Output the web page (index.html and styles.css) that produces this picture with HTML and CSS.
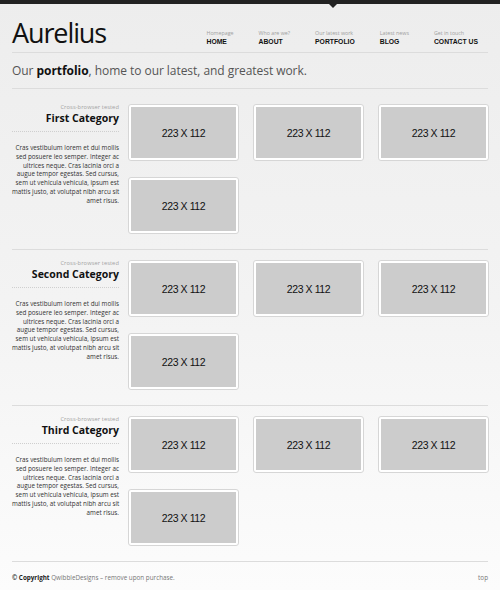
FILE: index.html
```html
<!DOCTYPE html>
<html>
<head>
<meta charset="utf-8">
<title>Aurelius — Portfolio</title>
<link rel="stylesheet" href="styles.css">
</head>
<body>
<div class="topbar"><span class="pointer"></span></div>
<div class="wrap">
  <header class="header">
    <div class="logo">Aurelius</div>
    <nav class="nav">
      <a class="nav-item" href="#"><span class="nav-sub">Homepage</span><span class="nav-main">HOME</span></a>
      <a class="nav-item" href="#"><span class="nav-sub">Who are we?</span><span class="nav-main">ABOUT</span></a>
      <a class="nav-item" href="#"><span class="nav-sub">Our latest work</span><span class="nav-main">PORTFOLIO</span></a>
      <a class="nav-item" href="#"><span class="nav-sub">Latest news</span><span class="nav-main">BLOG</span></a>
      <a class="nav-item" href="#"><span class="nav-sub">Get in touch</span><span class="nav-main">CONTACT US</span></a>
    </nav>
  </header>
  <div class="tagline">Our <b>portfolio</b>, home to our latest, and greatest work.</div>

  <section class="cat first">
    <div class="cat-info">
      <p class="cat-tag">Cross-browser tested</p>
      <h2 class="cat-title">First Category</h2>
      <p class="cat-desc">Cras vestibulum lorem et dui mollis<br>sed posuere leo semper. Integer ac<br>ultrices neque. Cras lacinia orci a<br>augue tempor egestas. Sed cursus,<br>sem ut vehicula vehicula, ipsum est<br>mattis justo, at volutpat nibh arcu sit<br>amet risus.</p>
    </div>
    <div class="thumbs">
      <div class="thumb"><div class="thumb-img">223 X 112</div></div>
      <div class="thumb"><div class="thumb-img">223 X 112</div></div>
      <div class="thumb"><div class="thumb-img">223 X 112</div></div>
      <div class="thumb"><div class="thumb-img">223 X 112</div></div>
    </div>
  </section>

  <section class="cat">
    <div class="cat-info">
      <p class="cat-tag">Cross-browser tested</p>
      <h2 class="cat-title">Second Category</h2>
      <p class="cat-desc">Cras vestibulum lorem et dui mollis<br>sed posuere leo semper. Integer ac<br>ultrices neque. Cras lacinia orci a<br>augue tempor egestas. Sed cursus,<br>sem ut vehicula vehicula, ipsum est<br>mattis justo, at volutpat nibh arcu sit<br>amet risus.</p>
    </div>
    <div class="thumbs">
      <div class="thumb"><div class="thumb-img">223 X 112</div></div>
      <div class="thumb"><div class="thumb-img">223 X 112</div></div>
      <div class="thumb"><div class="thumb-img">223 X 112</div></div>
      <div class="thumb"><div class="thumb-img">223 X 112</div></div>
    </div>
  </section>

  <section class="cat">
    <div class="cat-info">
      <p class="cat-tag">Cross-browser tested</p>
      <h2 class="cat-title">Third Category</h2>
      <p class="cat-desc">Cras vestibulum lorem et dui mollis<br>sed posuere leo semper. Integer ac<br>ultrices neque. Cras lacinia orci a<br>augue tempor egestas. Sed cursus,<br>sem ut vehicula vehicula, ipsum est<br>mattis justo, at volutpat nibh arcu sit<br>amet risus.</p>
    </div>
    <div class="thumbs">
      <div class="thumb"><div class="thumb-img">223 X 112</div></div>
      <div class="thumb"><div class="thumb-img">223 X 112</div></div>
      <div class="thumb"><div class="thumb-img">223 X 112</div></div>
      <div class="thumb"><div class="thumb-img">223 X 112</div></div>
    </div>
  </section>

  <footer class="footer">
    <p class="copy"><b>© Copyright</b> QwibbleDesigns – remove upon purchase.</p>
    <a class="top-link" href="#">top</a>
  </footer>
</div>
</body>
</html>
```
FILE: styles.css
```css
html, body {
  margin: 0;
  padding: 0;
}
body {
  background: linear-gradient(#ededed 0px, #f3f3f3 300px, #fcfcfc 590px);
  font-family: "Open Sans", "DejaVu Sans", sans-serif;
  color: #222;
  min-height: 590px;
}
.topbar {
  height: 4px;
  background: #222;
  position: relative;
}
.pointer {
  position: absolute;
  left: 329px;
  top: 4px;
  width: 0;
  height: 0;
  border-left: 4px solid transparent;
  border-right: 4px solid transparent;
  border-top: 4px solid #222;
}
.wrap {
  width: 476px;
  margin: 0 12px;
}
.header {
  display: flex;
  justify-content: space-between;
  align-items: flex-start;
  height: 48px;
  border-bottom: 1px solid #dcdcdc;
}
.logo {
  font-size: 27px;
  line-height: 27px;
  letter-spacing: -1.1px;
  color: #111;
  margin-top: 15px;
}
.nav {
  display: flex;
  gap: 25px;
  padding-right: 10px;
  margin-top: 25px;
}
.nav-item {
  display: flex;
  flex-direction: column;
  text-decoration: none;
}
.nav-sub {
  font-size: 5.3px;
  line-height: 8px;
  color: #a0a0a0;
}
.nav-main {
  font-family: "Liberation Sans", Arial, sans-serif;
  font-weight: bold;
  font-size: 6.8px;
  line-height: 10px;
  color: #111;
}
.tagline {
  height: 35px;
  line-height: 35px;
  font-size: 12px;
  letter-spacing: -0.05px;
  color: #555;
  border-bottom: 1px solid #dcdcdc;
}
.tagline b {
  color: #111;
}
.cat {
  display: flex;
  gap: 9px;
  padding: 10px 0 15px;
  border-bottom: 1px solid #dcdcdc;
}
.cat.first {
  padding-top: 15px;
}
.cat-info {
  width: 107px;
  flex: none;
  text-align: right;
}
.cat-tag {
  margin: 0;
  font-size: 5.7px;
  line-height: 7px;
  color: #a3a3a3;
  letter-spacing: 0.1px;
}
.cat-title {
  margin: 0;
  font-size: 10.5px;
  line-height: 14px;
  font-weight: bold;
  color: #111;
  padding-bottom: 6px;
  border-bottom: 1px dotted #cfcfcf;
}
.cat-desc {
  margin: 12px 0 0;
  font-size: 6.3px;
  line-height: 8.8px;
  color: #333;
  white-space: nowrap;
}
.thumbs {
  display: grid;
  grid-template-columns: repeat(3, 111px);
  column-gap: 14px;
  row-gap: 16px;
  align-content: start;
}
.thumb {
  box-sizing: border-box;
  width: 111px;
  height: 57px;
  padding: 2px;
  background: #fff;
  border: 1px solid #d6d6d6;
  border-radius: 3px;
}
.thumb-img {
  height: 100%;
  background: #cccccc;
  display: flex;
  align-items: center;
  justify-content: center;
  font-family: "Liberation Sans", Arial, sans-serif;
  font-size: 10.5px;
  color: #111;
  letter-spacing: -0.4px;
}
.footer {
  display: flex;
  justify-content: space-between;
  align-items: center;
  height: 30px;
  font-size: 6.3px;
  color: #777;
}
.copy {
  margin: 0;
}
.copy b {
  color: #222;
}
.top-link {
  color: #777;
  text-decoration: none;
}
```
